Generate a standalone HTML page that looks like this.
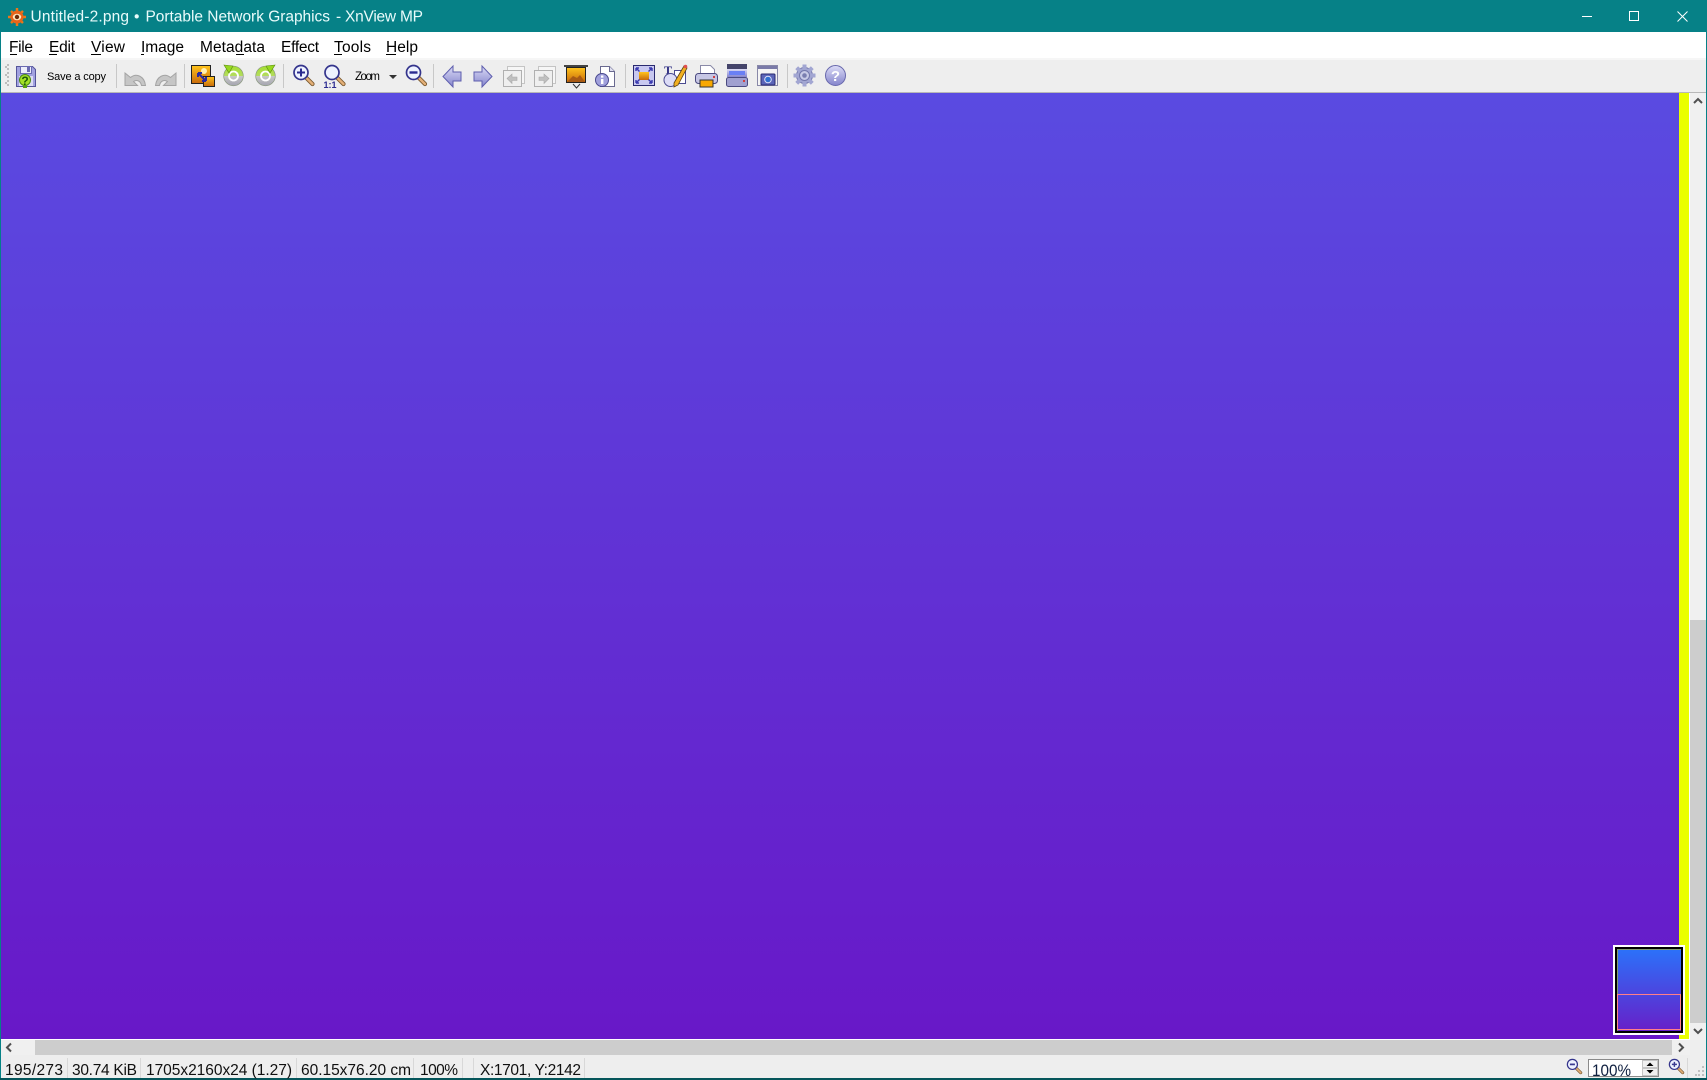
<!DOCTYPE html>
<html><head><meta charset="utf-8"><title>XnView MP</title>
<style>
html,body{margin:0;padding:0;width:1707px;height:1080px;overflow:hidden;background:#eee}
svg{position:absolute;left:0;top:0;display:block}
text{font-family:"Liberation Sans",sans-serif;}
</style></head><body>
<svg width="1707" height="1080" viewBox="0 0 1707 1080" xmlns="http://www.w3.org/2000/svg">
<defs>
<linearGradient id="bg" x1="0" y1="0" x2="0" y2="1"><stop offset="0" stop-color="#5a4be1"/><stop offset="1" stop-color="#6818c8"/></linearGradient>
<linearGradient id="th" x1="0" y1="0" x2="0" y2="1"><stop offset="0" stop-color="#2b72fa"/><stop offset="1" stop-color="#6720c8"/></linearGradient>
<linearGradient id="bl" x1="0" y1="0" x2="0" y2="1"><stop offset="0" stop-color="#dcdcf6"/><stop offset="1" stop-color="#8484cc"/></linearGradient>
<linearGradient id="ph" x1="0" y1="0" x2="0" y2="1"><stop offset="0" stop-color="#ffc41c"/><stop offset="1" stop-color="#c86a0c"/></linearGradient>
<linearGradient id="gr" x1="0" y1="0" x2="0" y2="1"><stop offset="0" stop-color="#a4e030"/><stop offset=".5" stop-color="#b4dc60"/><stop offset=".5" stop-color="#c8c8c8"/><stop offset="1" stop-color="#a4a4b0"/></linearGradient>
<g id="lens"><path d="M12 12l7 7" stroke="#7a5a30" stroke-width="4.200" stroke-linecap="round"/><path d="M12 12l7 7" stroke="#e4b078" stroke-width="2.400" stroke-linecap="round"/><circle cx="7.500" cy="7.500" r="7" fill="#eef2ff" stroke="#34348c" stroke-width="1.700"/></g>
</defs>

<!-- frame -->
<rect width="1707" height="1080" fill="#eeeeee"/>
<rect width="1707" height="32" fill="#068187"/>
<rect y="32" width="1707" height="26" fill="#fff"/>
<rect y="58" width="1707" height="2" fill="#f6f6f6"/>
<rect y="60" width="1707" height="32" fill="#eeeeee"/>
<rect y="92" width="1707" height="1" fill="#b8b8b8"/>

<!-- image -->
<rect x="1" y="93" width="1678" height="946" fill="url(#bg)"/>
<rect x="1679" y="93" width="10" height="946" fill="#eaff00"/>
<rect x="1689" y="93" width="1" height="947" fill="#fff"/>
<rect x="1" y="1039" width="1689" height="1" fill="#fff"/>

<!-- scrollbars -->
<rect x="1690" y="93" width="16" height="947" fill="#f0f0f0"/>
<rect x="1690" y="620" width="16" height="403" fill="#cdcdcd"/>
<path d="M1694 103l4-4 4 4" fill="none" stroke="#505050" stroke-width="2"/>
<path d="M1694 1029l4 4 4-4" fill="none" stroke="#505050" stroke-width="2"/>
<rect x="1" y="1040" width="1689" height="15" fill="#f0f0f0"/>
<rect x="35" y="1040" width="1637" height="15" fill="#cdcdcd"/>
<path d="M11 1043.500l-4 4 4 4" fill="none" stroke="#505050" stroke-width="2"/>
<path d="M1679 1043.500l4 4-4 4" fill="none" stroke="#505050" stroke-width="2"/>

<!-- navigator thumb -->
<rect x="1613" y="945" width="72" height="90" fill="#fff"/>
<rect x="1615" y="947" width="68" height="86" fill="#000"/>
<rect x="1617" y="949" width="64" height="82" fill="url(#th)"/>
<path d="M1617.500 1031V949.500H1681" fill="none" stroke="#7f9a70" stroke-width="1"/>
<rect x="1617.500" y="994.500" width="63" height="35" fill="none" stroke="#ff0010" stroke-width="1"/>
<rect x="1617.500" y="994.500" width="63" height="35" fill="none" stroke="#fff" stroke-width="1" stroke-dasharray="1 1"/>

<!-- side borders -->
<rect x="0" y="0" width="1" height="1080" fill="#068187"/>
<rect x="1706" y="0" width="1" height="1080" fill="#068187"/>
<rect x="0" y="1078" width="1707" height="2" fill="#05555a"/>

<!-- title -->
<g>
<path d="M17 8v18M8 17h18M11 11l12 12M23 11L11 23" stroke="#e87818" stroke-width="2.400"/>
<circle cx="17" cy="17" r="6.500" fill="#e8641a"/>
<ellipse cx="17" cy="17" rx="4.200" ry="3.200" fill="#ffe8c0"/><circle cx="17" cy="17" r="2.200" fill="#6a2a08"/>
</g>
<g font-size="15.500" fill="#e8fbfb">
<text x="30.500" y="21.500" textLength="98.500" lengthAdjust="spacing">Untitled-2.png</text>
<text x="134" y="21.500">•</text>
<text x="145.500" y="21.500" textLength="184.500" lengthAdjust="spacing">Portable Network Graphics</text>
<text x="336" y="21.500">-</text>
<text x="345" y="21.500" textLength="78" lengthAdjust="spacing">XnView MP</text>
</g>
<rect x="1582" y="16" width="10" height="1" fill="#fff"/>
<rect x="1629.500" y="11.500" width="9" height="9" fill="none" stroke="#fff"/>
<path d="M1677.500 11.500l10 10M1687.500 11.500l-10 10" stroke="#fff" stroke-width="1" fill="none"/>

<!-- menu -->
<g font-size="15.500" fill="#000">
<text x="9" y="52" textLength="24" lengthAdjust="spacing">File</text>
<text x="49" y="52" textLength="26" lengthAdjust="spacing">Edit</text>
<text x="91" y="52" textLength="34" lengthAdjust="spacing">View</text>
<text x="141" y="52" textLength="43" lengthAdjust="spacing">Image</text>
<text x="200" y="52" textLength="65" lengthAdjust="spacing">Metadata</text>
<text x="281" y="52" textLength="38" lengthAdjust="spacing">Effect</text>
<text x="334" y="52" textLength="37" lengthAdjust="spacing">Tools</text>
<text x="386" y="52" textLength="32" lengthAdjust="spacing">Help</text>
</g>
<g fill="#000">
<rect x="10" y="54" width="7" height="1"/><rect x="49" y="54" width="8" height="1"/><rect x="91" y="54" width="10" height="1"/>
<rect x="141" y="54" width="3" height="1"/><rect x="236" y="54" width="8" height="1"/><rect x="334" y="54" width="8" height="1"/><rect x="386" y="54" width="10" height="1"/>
</g>

<!-- toolbar gripper -->
<g fill="#bdbdbd"><rect x="7" y="64" width="2" height="2"/><rect x="7" y="68" width="2" height="2"/><rect x="7" y="72" width="2" height="2"/><rect x="7" y="76" width="2" height="2"/><rect x="7" y="80" width="2" height="2"/><rect x="7" y="84" width="2" height="2"/><rect x="5" y="66" width="2" height="2"/><rect x="5" y="74" width="2" height="2"/><rect x="5" y="82" width="2" height="2"/></g>
<!-- separators -->
<g fill="#c8c8c8"><rect x="116" y="64" width="1" height="24"/><rect x="184" y="64" width="1" height="24"/><rect x="283" y="64" width="1" height="24"/><rect x="433" y="64" width="1" height="24"/><rect x="625" y="64" width="1" height="24"/><rect x="787" y="64" width="1" height="24"/></g>

<!-- save -->
<path d="M16.500 66.500h16l3 3v17h-19z" fill="#a2a2e0" stroke="#55559a"/>
<rect x="20.500" y="66.500" width="11" height="7" fill="#ecedfa" stroke="#6a6ab0"/>
<rect x="27" y="67" width="3" height="5" fill="#6a6ab0"/>
<rect x="19" y="76" width="14" height="10" fill="#dcdcf4"/>
<circle cx="25" cy="80" r="5.500" fill="#a4e028" stroke="#4a8a10"/>
<text x="25" y="85" font-size="12" font-weight="bold" text-anchor="middle" fill="#1e5a08">?</text>
<rect x="23" y="85" width="4" height="3" fill="#5aa010"/>
<text x="47" y="80" font-size="11" fill="#000" textLength="59" lengthAdjust="spacing">Save a copy</text>

<!-- undo/redo -->
<path d="M125 73v12.500h12.500l-4-4c3-2 7-1 8 4h4c-1-9-9-13-15-8z" fill="#c6c6c6" stroke="#a4a4a4"/>
<path d="M176 73v12.500h-12.500l4-4c-3-2-7-1-8 4h-4c1-9 9-13 15-8z" fill="#c6c6c6" stroke="#a4a4a4"/>

<!-- image icon -->
<rect x="191.500" y="65.500" width="19" height="18" fill="url(#ph)" stroke="#222"/>
<circle cx="204" cy="71" r="3" fill="#fff0b0"/>
<rect x="203.500" y="76.500" width="11" height="10" fill="url(#ph)" stroke="#222"/>
<path d="M198 73l8 8M198 73v4M198 73h4M206 81h-4M206 81v-4" stroke="#2a2aa0" stroke-width="2" fill="none"/>

<!-- rotate -->
<circle cx="233.500" cy="76" r="9.800" fill="url(#gr)" stroke="#8c9a80" stroke-width=".7"/>
<circle cx="233.500" cy="76" r="4.500" fill="none" stroke="#fff" stroke-width="1.800"/>
<path d="M224 65l9 1-4 7z" fill="#96d820" stroke="#5a8a10" stroke-width=".6"/>
<circle cx="265.500" cy="76" r="9.800" fill="url(#gr)" stroke="#8c9a80" stroke-width=".7"/>
<circle cx="265.500" cy="76" r="4.500" fill="none" stroke="#fff" stroke-width="1.800"/>
<path d="M275 65l-9 1 4 7z" fill="#96d820" stroke="#5a8a10" stroke-width=".6"/>

<!-- zoom icons -->
<use href="#lens" x="293.500" y="65"/><path d="M297 72.500h8M301 68.500v8" stroke="#2a2a90" stroke-width="2"/>
<use href="#lens" x="324.500" y="65"/><text x="323.500" y="88" font-size="9" font-weight="bold" fill="#2a2a90">1:1</text>
<text x="355" y="80" font-size="11.500" fill="#000" textLength="25" lengthAdjust="spacing">Zoom</text>
<path d="M389 75h8l-4 4z" fill="#333"/>
<use href="#lens" x="406" y="65"/><path d="M409.500 72.500h8" stroke="#2a2a90" stroke-width="2.400"/>

<!-- arrows -->
<path d="M453 66v6h8v9h-8v6l-10-10.500z" fill="url(#bl)" stroke="#5e5eae"/>
<path d="M482 66v6h-8v9h8v6l10-10.500z" fill="url(#bl)" stroke="#5e5eae"/>

<!-- ghost prev/next -->
<rect x="507.500" y="66.500" width="17" height="17" fill="#f6f6f6" stroke="#c4c4c4"/>
<rect x="503.500" y="70.500" width="18" height="16" fill="#efefef" stroke="#b0b0b0"/>
<path d="M507 78.500l5-4.500v3h5v3.500h-5v3z" fill="#c0c0c0" stroke="#a8a8a8" stroke-width=".6"/>
<rect x="538.500" y="66.500" width="17" height="17" fill="#f6f6f6" stroke="#c4c4c4"/>
<rect x="534.500" y="70.500" width="18" height="16" fill="#efefef" stroke="#b0b0b0"/>
<path d="M549 78.500l-5-4.500v3h-5v3.500h5v3z" fill="#c0c0c0" stroke="#a8a8a8" stroke-width=".6"/>

<!-- slideshow -->
<rect x="564" y="65" width="24" height="2" fill="#444"/>
<rect x="566.500" y="67.500" width="19" height="15" fill="url(#ph)" stroke="#222"/>
<path d="M567 82l6-6 4 2 3-3 5 7z" fill="#a85a14"/>
<path d="M573 84l3.500 4 3.500-4" fill="#eee" stroke="#333"/>

<!-- info -->
<path d="M600.500 66.500h9l5 5v15h-14z" fill="#fff" stroke="#6a6a90"/>
<path d="M609.500 66.500v5h5" fill="#e0e0f0" stroke="#6a6a90"/>
<circle cx="602" cy="80" r="6.500" fill="#a0a0dc" stroke="#4a4a90"/>
<rect x="601" y="79" width="2.400" height="5" fill="#fff"/><rect x="601" y="75.500" width="2.400" height="2.200" fill="#fff"/>

<!-- fit -->
<rect x="633.500" y="65.500" width="21" height="20" fill="#c8c8f0" stroke="#2a2a70"/>
<rect x="639" y="72" width="10" height="8" fill="url(#ph)"/>
<path d="M636 68l3.500 3.500M652 68l-3.500 3.500M636 83l3.500-3.500M652 83l-3.500-3.500M636 68h3M636 68v3M652 68h-3M652 68v3M636 83h3M636 83v-3M652 83h-3M652 83v-3" stroke="#3a3ab0" stroke-width="1.400" fill="none"/>

<!-- draw -->
<text x="664" y="74" font-size="12" font-weight="bold" fill="#2a2a80" style="font-family:'Liberation Serif',serif">T</text>
<rect x="674.500" y="70.500" width="11" height="13" fill="#fff" stroke="#4a4a90"/>
<circle cx="670.500" cy="80" r="6.500" fill="#dcdcf6" stroke="#4a4a90"/>
<path d="M684 66l3 2-9 17-4 2 0-4z" fill="#f2b020" stroke="#5a4010" stroke-width=".8"/>
<circle cx="685.500" cy="66.500" r="1.800" fill="#e05050"/>

<!-- print -->
<path d="M700.500 65.500h10l4 4v8h-14z" fill="#fff" stroke="#8a8aa8"/>
<rect x="695.500" y="73.500" width="22" height="10" rx="3" fill="#c6c6e4" stroke="#4a4a80"/>
<rect x="700" y="80" width="13" height="7" fill="#f8a800" stroke="#333"/>
<rect x="713" y="76" width="2" height="2" fill="#d04040"/>

<!-- scan -->
<rect x="727" y="64" width="20" height="5" fill="#44446a"/>
<rect x="727" y="69" width="20" height="8" fill="url(#bl)"/>
<rect x="729" y="71" width="16" height="4" fill="#6a80f4"/>
<rect x="726.500" y="77.500" width="21" height="9" rx="2" fill="#a0a0d0" stroke="#4a4a80"/>
<rect x="743" y="80" width="2" height="2" fill="#d04040"/>

<!-- camera -->
<rect x="757.500" y="65.500" width="20" height="20" fill="#f4f4f4" stroke="#8888a8"/>
<rect x="758" y="66" width="19" height="3" fill="#7a7aa8"/>
<rect x="761" y="74" width="14" height="11" rx="1" fill="#5a64b8" stroke="#2a2a70"/>
<circle cx="768" cy="79.500" r="3.300" fill="#2f6fd0" stroke="#dfe0f8"/>

<!-- gear -->
<g transform="translate(804.500 75.500)">
<circle r="8" fill="#a2a6d2" stroke="#7478ac"/>
<path d="M-2 -11h4v22h-4zM-11 -2h22v4h-22z" fill="#a2a6d2"/>
<path d="M-2 -11h4v22h-4zM-11 -2h22v4h-22z" fill="#a2a6d2" transform="rotate(45)"/>
<circle r="5" fill="#c8cae6" stroke="#7478ac"/><circle r="2.300" fill="#7a7eb0"/>
</g>

<!-- help -->
<circle cx="835.500" cy="75.500" r="10" fill="url(#bl)" stroke="#6868ac"/>
<text x="835.500" y="81" font-size="15" font-weight="bold" text-anchor="middle" fill="#fff">?</text>

<!-- status bar -->
<g font-size="15.500" fill="#101010">
<text x="5" y="1075" textLength="58" lengthAdjust="spacing">195/273</text>
<text x="72" y="1075" textLength="65" lengthAdjust="spacing">30.74 KiB</text>
<text x="146" y="1075" textLength="146" lengthAdjust="spacing">1705x2160x24 (1.27)</text>
<text x="301" y="1075" textLength="110" lengthAdjust="spacing">60.15x76.20 cm</text>
<text x="420" y="1075" textLength="38" lengthAdjust="spacing">100%</text>
<text x="480" y="1075" textLength="101" lengthAdjust="spacing">X:1701, Y:2142</text>
</g>
<g fill="#d8d8d8"><rect x="67" y="1058" width="1" height="20"/><rect x="140" y="1058" width="1" height="20"/><rect x="296" y="1058" width="1" height="20"/><rect x="413" y="1058" width="1" height="20"/><rect x="462" y="1058" width="1" height="20"/><rect x="473" y="1058" width="1" height="20"/><rect x="584" y="1058" width="1" height="20"/><rect x="1687" y="1058" width="1" height="20"/></g>

<!-- zoom control -->
<g transform="translate(1567 1059) scale(.72)"><use href="#lens"/><path d="M4 7.500h7" stroke="#3a3a90" stroke-width="2.400"/></g>
<rect x="1588.500" y="1059.500" width="70" height="17" fill="#fff" stroke="#8a8a8a"/>
<rect x="1642.500" y="1060.500" width="15" height="7" fill="#f0f0f0" stroke="#c4c4c4"/>
<rect x="1642.500" y="1068.500" width="15" height="7" fill="#f0f0f0" stroke="#c4c4c4"/>
<path d="M1646.500 1066l3.500-3.500 3.500 3.500z" fill="#000"/><path d="M1646.500 1070l3.500 3.500 3.500-3.500z" fill="#000"/>
<text x="1592" y="1076" font-size="17" fill="#102040" textLength="39" lengthAdjust="spacingAndGlyphs">100%</text>
<g transform="translate(1669 1059) scale(.72)"><use href="#lens"/><path d="M4 7.500h7M7.500 4v7" stroke="#3a3a90" stroke-width="2"/></g>
<g fill="#c0c0c0"><rect x="1702" y="1066" width="2" height="2"/><rect x="1698" y="1070" width="2" height="2"/><rect x="1702" y="1070" width="2" height="2"/><rect x="1695" y="1074" width="2" height="2"/><rect x="1698" y="1074" width="2" height="2"/><rect x="1702" y="1074" width="2" height="2"/></g>
</svg>
</body></html>
